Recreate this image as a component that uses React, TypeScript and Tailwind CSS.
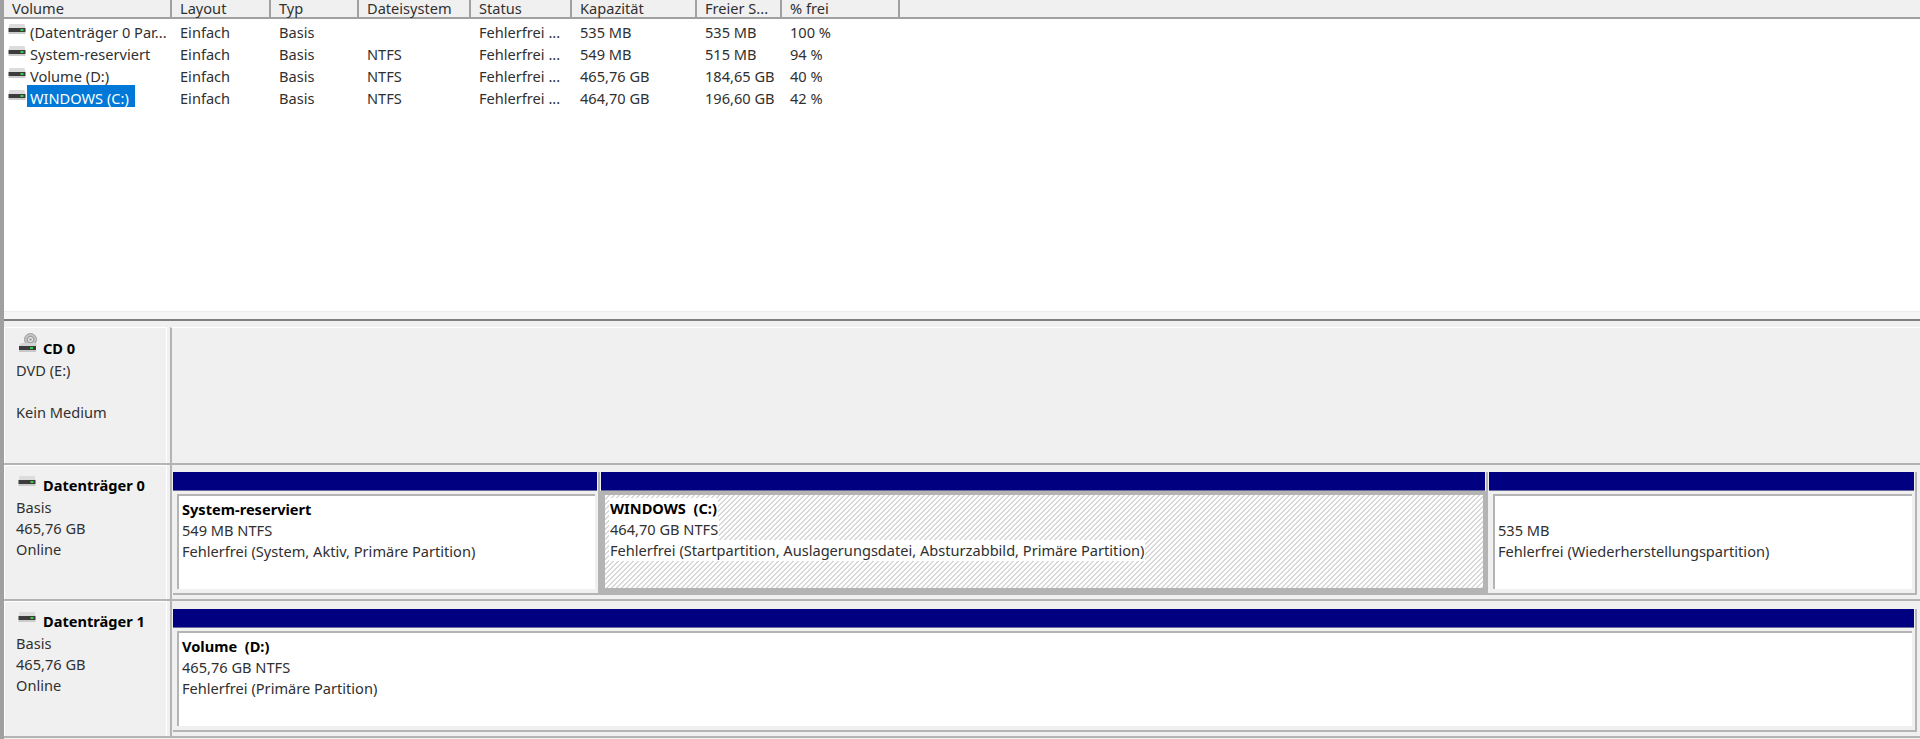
import React from 'react';

const columns = [
  { label: 'Volume', width: 'w-[168px]' },
  { label: 'Layout', width: 'w-[99px]' },
  { label: 'Typ', width: 'w-[88px]' },
  { label: 'Dateisystem', width: 'w-[112px]' },
  { label: 'Status', width: 'w-[101px]' },
  { label: 'Kapazität', width: 'w-[125px]' },
  { label: 'Freier S...', width: 'w-[85px]' },
  { label: '% frei', width: 'w-[118px]' },
];

const rows = [
  ['(Datenträger 0 Par...', 'Einfach', 'Basis', '', 'Fehlerfrei ...', '535 MB', '535 MB', '100 %'],
  ['System-reserviert', 'Einfach', 'Basis', 'NTFS', 'Fehlerfrei ...', '549 MB', '515 MB', '94 %'],
  ['Volume (D:)', 'Einfach', 'Basis', 'NTFS', 'Fehlerfrei ...', '465,76 GB', '184,65 GB', '40 %'],
  ['WINDOWS (C:)', 'Einfach', 'Basis', 'NTFS', 'Fehlerfrei ...', '464,70 GB', '196,60 GB', '42 %'],
];

function DriveIcon({ className }: { className?: string }) {
  return (
    <svg width="18" height="11" viewBox="0 0 18 11" className={`shrink-0 ${className ?? ''}`}>
      <path d="M1.5 0h15l1 4h-17z" fill="#dcdcdc" />
      <rect x="0.5" y="4" width="17" height="4" fill="#3c3c3c" />
      <rect x="0.5" y="8" width="17" height="2" fill="#cccccc" />
      <rect x="12.5" y="5" width="3" height="2" fill="#35d04a" />
    </svg>
  );
}

function CdIcon() {
  return (
    <svg width="20" height="20" viewBox="0 0 20 20" className="shrink-0 -mt-[12px]">
      <circle cx="12.5" cy="6.5" r="6" fill="#c4c4c4" stroke="#a0a0a0" />
      <circle cx="12.5" cy="6.5" r="3.2" fill="#e8e8e8" stroke="#8e8e8e" />
      <circle cx="12.5" cy="6.5" r="1.2" fill="#969696" />
      <path d="M3 10h15l1 3H1z" fill="#d4d4d4" />
      <rect x="1" y="13" width="17" height="4" fill="#3c3c3c" />
      <rect x="1" y="17" width="17" height="2" fill="#c8c8c8" />
      <rect x="12" y="14" width="3" height="2" fill="#35d04a" />
    </svg>
  );
}

function DiskInfo({ title, lines, cd, pad }: { title: string; lines: string[]; cd?: boolean; pad: string }) {
  return (
    <div className={`w-[163px] mr-[3px] shrink-0 bg-[#f0f0f0] border-t border-l border-r border-white pl-[11px] ${pad}`}>
      <div className={`flex items-center h-[23px] pl-[2px] ${cd ? 'gap-[5px]' : 'gap-[7px]'}`}>
        {cd ? <CdIcon /> : <DriveIcon className="-mt-[8px]" />}
        <span className="font-bold text-black">{title}</span>
      </div>
      {lines.map((l, i) => (
        <div key={i} className="h-[21px] leading-[21px]">{l || '\u00a0'}</div>
      ))}
    </div>
  );
}

function Partition({ width, lines, bold, selected, inset }: { width: string; lines: string[]; bold?: string; selected?: boolean; inset?: string }) {
  return (
    <div className={`${width} shrink-0 flex flex-col border-r-[2px] border-b-[2px] border-[#b4b4b4] pr-[1px] ${inset ?? ''}`}>
      <div className="h-[19px] shrink-0 bg-[#000080] border-b border-[#6a6a9a]" />
      {selected ? (
        <div className="flex-1 border-[#b4b4b4] border-t-[4px] border-l-[5px] border-r-[4px] border-b-[5px] -ml-[1px] -mr-[2px]">
          <div className="h-full pl-[4px] pt-[3px] bg-[repeating-linear-gradient(135deg,#ffffff_0px,#ffffff_2.2px,#d8d8d8_2.2px,#d8d8d8_3.536px)]">
            <Lines bold={bold} lines={lines} selected />
          </div>
        </div>
      ) : (
        <div className="flex-1 mt-[3px] ml-[4px] border-r-[2px] border-b-[4px] border-[#f0f0f0]">
          <div className="h-full bg-white border-t-[2px] border-l-[2px] border-[#b4b4b4] pl-[2px] pt-[3px]">
            <Lines bold={bold} lines={lines} />
          </div>
        </div>
      )}
    </div>
  );
}

function Lines({ bold, lines, selected }: { bold?: string; lines: string[]; selected?: boolean }) {
  return (
    <>
      <div className="h-[21px] leading-[21px]">
        {bold && <span className={`font-bold text-black whitespace-pre inline-block px-[1px] ${selected ? 'bg-white' : ''}`}>{bold}</span>}
      </div>
      {lines.map((l, i) => (
        <div key={i} className="h-[21px] leading-[21px]">
          <span className={`inline-block px-[1px] ${selected ? 'bg-white' : ''}`}>{l}</span>
        </div>
      ))}
    </>
  );
}

export default function App() {
  return (
    <div className="h-[739px] w-[1920px] overflow-hidden bg-[#f0f0f0] text-[14.6px] text-[#303030] font-['Noto_Sans',sans-serif] border-l-[4px] border-[#a0a0a0]">
      {/* Volume list */}
      <div className="h-[321px] bg-white flex flex-col border-b-[2px] border-[#808080]">
        <div className="h-[19px] flex bg-[#f0f0f0] border-b-[2px] border-[#a0a0a0] shrink-0">
          {columns.map((c) => (
            <div key={c.label} className={`${c.width} pl-[8px] shrink-0 border-r-[2px] border-[#a0a0a0] leading-[17px] whitespace-nowrap`}>
              {c.label}
            </div>
          ))}
        </div>
        <div className="flex-1">
          {rows.map((r, i) => (
            <div key={i} className="flex h-[22px]">
              {r.map((cell, j) =>
                j === 0 ? (
                  <div key={j} className={`${columns[j].width} shrink-0 whitespace-nowrap flex items-center pl-[4px]`}>
                    <DriveIcon className="-mt-[1px]" />
                    <span className={`ml-[1px] pl-[3px] pr-[6px] h-[22px] pt-[3px] leading-[20px] ${i === 3 ? 'bg-[#0078d7] text-white' : ''}`}>{cell}</span>
                  </div>
                ) : (
                  <div key={j} className={`${columns[j].width} shrink-0 whitespace-nowrap pl-[8px] pt-[3px] leading-[20px]`}>
                    {cell}
                  </div>
                ),
              )}
            </div>
          ))}
        </div>
        <div className="h-[8px] bg-[#f6f6f6] border-t border-[#ececec]" />
      </div>

      {/* Disk rows */}
      <div className="flex h-[138px] mt-[6px] border-b-[2px] border-[#b4b4b4]">
        <DiskInfo cd pad="pt-[9px]" title="CD 0" lines={['DVD (E:)', '', 'Kein Medium']} />
        <div className="flex-1 border-l-[2px] border-[#b4b4b4] bg-[#f0f0f0] border-t border-t-white" />
      </div>
      <div className="flex h-[136px] border-b-[2px] border-[#b4b4b4]">
        <DiskInfo pad="pt-[8px]" title="Datenträger 0" lines={['Basis', '465,76 GB', 'Online']} />
        <div className="flex-1 flex border-l-[2px] border-[#b4b4b4] pt-[7px] pl-[1px] pb-[4px]">
          <Partition width="w-[427px]" bold="System-reserviert" lines={['549 MB NTFS', 'Fehlerfrei (System, Aktiv, Primäre Partition)']} />
          <Partition selected inset="pl-[1px]" width="w-[888px]" bold="WINDOWS  (C:)" lines={['464,70 GB NTFS', 'Fehlerfrei (Startpartition, Auslagerungsdatei, Absturzabbild, Primäre Partition)']} />
          <Partition inset="pl-[1px]" width="w-[429px]" lines={['535 MB', 'Fehlerfrei (Wiederherstellungspartition)']} />
        </div>
      </div>
      <div className="flex h-[137px] border-b-[2px] border-[#b4b4b4]">
        <DiskInfo pad="pt-[8px]" title="Datenträger 1" lines={['Basis', '465,76 GB', 'Online']} />
        <div className="flex-1 flex border-l-[2px] border-[#b4b4b4] pt-[8px] pl-[1px] pb-[4px]">
          <Partition width="w-[1744px]" bold="Volume  (D:)" lines={['465,76 GB NTFS', 'Fehlerfrei (Primäre Partition)']} />
        </div>
      </div>
    </div>
  );
}
